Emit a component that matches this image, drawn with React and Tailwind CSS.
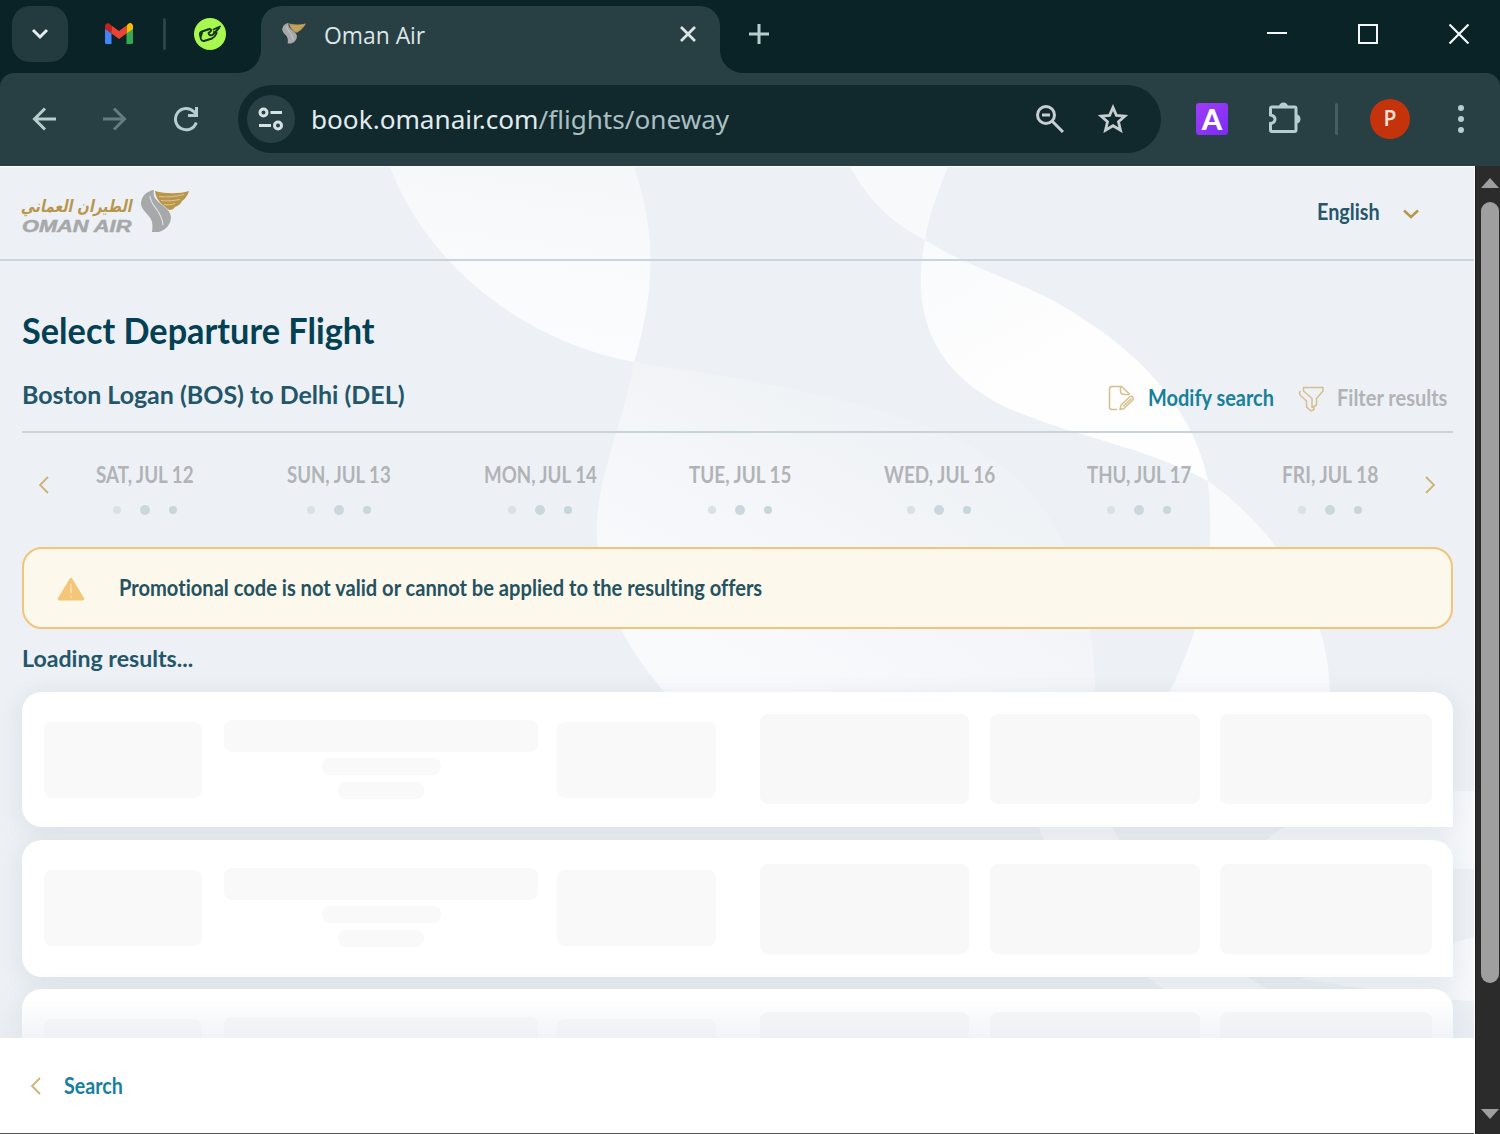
import React, { useLayoutEffect, useRef, useState } from 'react';

const DAYS = [
    { label: 'SAT, JUL 12', cell: 'w-[194px]', text: 'w-[98px]' },
    { label: 'SUN, JUL 13', cell: 'w-[194px]', text: 'w-[104px]' },
    { label: 'MON, JUL 14', cell: 'w-[208px]', text: 'w-[113px]' },
    { label: 'TUE, JUL 15', cell: 'w-[192px]', text: 'w-[102px]' },
    { label: 'WED, JUL 16', cell: 'w-[206px]', text: 'w-[111px]' },
    { label: 'THU, JUL 17', cell: 'w-[193px]', text: 'w-[104px]' },
    { label: 'FRI, JUL 18', cell: 'w-[190px]', text: 'w-[96px]' },
];

// Condenses a line of text so that it fills the width of its box
const FitText = ({ className = '', children }) => {
    const box = useRef(null);
    const text = useRef(null);
    const [scale, setScale] = useState(1);

    useLayoutEffect(() => {
        setScale(box.current.clientWidth / text.current.offsetWidth);
    }, [children]);

    return (
        <span ref={box} className={`flex shrink-0 whitespace-nowrap ${className}`}>
            <span ref={text} className="block shrink-0 origin-left" style={{ transform: `scaleX(${scale})` }}>
                {children}
            </span>
        </span>
    );
};

const Falcon = ({ className }) => (
    <svg viewBox="0 0 48 43" className={className}>
        <path d="M13 0C5 1 0 7 0 14c1 8 9 10 11 18 .8 4 .3 7 0 10h7c7-2 12-8 12-15C29 17 16 14 13 6c-.5-2-.5-4 0-6z" fill="#a7a8aa" />
        <path d="M9 6c0 10 12 14 13 29" stroke="#dfe3e6" strokeWidth="1.1" fill="none" />
        <path d="M14 1c11 3 24 3 34 0-1 4-4 8-7 10-1 3-4 5-7 6-1 2-3 3-6 3C22 15 15 11 14 1z" fill="#b8964c" />
        <path d="M18 6.500c9 1 17 0 25-2M20 10.500c7 1 13 0 19-1M23 14.500c4 1 8 0 11-1" stroke="#e6d3a3" strokeWidth="0.8" fill="none" />
    </svg>
);

const TabStrip = () => (
    <div className="flex h-[73px] items-start bg-[#0a2326]">
        <div className="ml-3 mt-1.5 flex h-14 w-14 items-center justify-center rounded-[18px] bg-[#233b3f]">
            <svg viewBox="0 0 18 12" className="h-3 w-[18px]" fill="none" stroke="#e4eeee" strokeWidth="3">
                <path d="M2 2l7 7 7-7" />
            </svg>
        </div>
        <svg viewBox="0 0 28 21" className="ml-[37px] mt-[23px] h-[21px] w-7">
            <path d="M0 4v15.500q0 1.500 1.500 1.500H6.500V8z" fill="#4285f4" />
            <path d="M28 4v15.500q0 1.500-1.500 1.500H21.500V8z" fill="#34a853" />
            <path d="M21.500 3v7.500L28 6V3.500c0-3-3-4.500-5-2.500z" fill="#fbbc04" />
            <path d="M0 3.500V6l6.500 4.500V3L5 1C3-.500 0 .500 0 3.500z" fill="#c5221f" />
            <path d="M6.500 2.500v8L14 16l7.500-5.500v-8L14 8z" fill="#ea4335" />
        </svg>
        <div className="ml-[30px] mt-[18px] h-8 w-[3px] rounded-full bg-[#2a4347]" />
        <svg viewBox="0 0 32 32" className="ml-7 mt-[18px] h-8 w-8">
            <circle cx="16" cy="16" r="16" fill="#a8f94f" />
            <g fill="none" stroke="#16300f" strokeWidth="1.900" strokeLinejoin="round" strokeLinecap="round">
                <path d="M14 11.500 8 13.500q-2.500 1-2 3.500l1 4q.700 2.500 3 2l8-2.500q3-1.500 4.500-5" />
                <path d="M14 11.500c2.500-1.500 4 .500 2.500 2l-2 1.500c.500 2.500 3 3 4.500 1.500l6-6.500" />
                <path d="M19.500 11.500 26 8.500M20 14l2.500.500M8 15l-1 3" />
            </g>
        </svg>
        {/* active tab with the flared feet */}
        <svg viewBox="0 0 24 24" className="ml-[11px] mt-[49px] h-6 w-6">
            <path d="M24 0v24H0C14 24 24 14 24 0z" fill="#283f43" />
        </svg>
        <div className="mt-1.5 flex h-[67px] w-[459px] rounded-t-[20px] bg-[#283f43]">
            <Falcon className="ml-[21px] mt-[17px] h-[21px] w-6" />
            <FitText className="ml-[18px] mt-[13px] h-8 w-[101px] font-['Open_Sans',sans-serif] text-2xl leading-8 text-[#dbe6e7]">Oman Air</FitText>
            <svg viewBox="0 0 16 16" className="ml-[255px] mt-5 h-4 w-4" stroke="#dbe6e7" strokeWidth="2.800">
                <path d="m1 1 14 14M15 1 1 15" />
            </svg>
        </div>
        <svg viewBox="0 0 24 24" className="mt-[49px] h-6 w-6">
            <path d="M0 0v24h24C10 24 0 14 0 0z" fill="#283f43" />
        </svg>
        <svg viewBox="0 0 20 20" className="ml-[5px] mt-6 h-5 w-5" stroke="#b7cdd0" strokeWidth="3">
            <path d="M10 0v20M0 10h20" />
        </svg>
        <div className="ml-auto mr-[31px] mt-6 flex gap-[71px]">
            <svg viewBox="0 0 20 20" className="h-5 w-5" stroke="#f3f7f7" strokeWidth="2">
                <path d="M0 9h20" />
            </svg>
            <svg viewBox="0 0 20 20" className="h-5 w-5" fill="none" stroke="#f3f7f7" strokeWidth="2">
                <path d="M1 1h18v18H1z" />
            </svg>
            <svg viewBox="0 0 20 20" className="h-5 w-5" stroke="#f3f7f7" strokeWidth="2.200">
                <path d="m.500.500 19 19M19.500.500l-19 19" />
            </svg>
        </div>
    </div>
);

const Toolbar = () => (
    <div className="h-[93px] bg-[#0a2326]">
        <div className="flex h-full items-center rounded-t-[14px] bg-[#283f43] pb-0.5">
            <svg viewBox="0 0 24 24" className="ml-8 h-6 w-6" fill="none" stroke="#b7cdd0" strokeWidth="3">
                <path d="M24 12H3M13 1.500 2.500 12 13 22.500" />
            </svg>
            <svg viewBox="0 0 24 24" className="ml-[47px] h-6 w-6" fill="none" stroke="#647b7f" strokeWidth="3">
                <path d="M0 12h21M11 1.500 21.500 12 11 22.500" />
            </svg>
            <svg viewBox="0 0 26 26" className="ml-[46px] h-[26px] w-[26px]" fill="none" stroke="#b7cdd0" strokeWidth="3">
                <path d="M23.300 16.500A10.700 10.700 0 1 1 21 5.800L23 8" />
                <path d="M23.500 1v8.500H15" />
            </svg>
            <div className="ml-[39px] flex h-[68px] w-[923px] items-center rounded-full bg-[#11292d]">
                <div className="ml-[9px] flex h-12 w-12 items-center justify-center rounded-full bg-[#283f43]">
                    <svg viewBox="0 0 26 24" className="h-6 w-[26px]" fill="none" stroke="#d5e2e4" strokeWidth="3">
                        <circle cx="5.500" cy="5.500" r="3.500" />
                        <circle cx="20" cy="18.500" r="3.500" />
                        <path d="M12.500 5.500H24M1 18.500h12" />
                    </svg>
                </div>
                <FitText className="ml-4 w-[418px] font-['Noto_Sans',sans-serif] text-[26px] leading-9 text-[#a9bfc2]">
                    <span className="text-[#e2ecee]">book.omanair.com</span>/flights/oneway
                </FitText>
                <svg viewBox="0 0 28 28" className="ml-[307px] h-7 w-7" fill="none" stroke="#c6ced0" strokeWidth="3">
                    <circle cx="10" cy="10" r="8.500" />
                    <path d="m16 16 11 11M6 10h8" />
                </svg>
                <svg viewBox="0 0 30 29" className="ml-[34px] h-[29px] w-[30px]" fill="none" stroke="#c6ced0" strokeWidth="2.800">
                    <path d="m15 3.500 3.400 7.900 8.600.7-6.500 5.700 2 8.400L15 21.700l-7.500 4.500 2-8.400L3 12.100l8.600-.7z" />
                </svg>
            </div>
            <div className="ml-[35px] flex h-8 w-8 items-center justify-center rounded-[3px] bg-linear-to-br from-[#a13cf8] to-[#7a2cf2] font-['Lato',sans-serif] text-[29px] leading-8 font-black text-white">A</div>
            <svg viewBox="0 0 34 34" className="ml-[39px] h-[34px] w-[34px] -translate-y-0.5">
                <path d="M5 7h22.500q1.500 0 1.500 1.500V30q0 1.500-1.500 1.500H5Q3.500 31.500 3.500 30v-6.500c6-1 6-7.500 0-8.500V8.500Q3.500 7 5 7z" fill="none" stroke="#b7cdd0" strokeWidth="3" />
                <path d="M12 6.500a4.500 4 0 0 1 9 0zM29.500 14.500a4 4.500 0 0 1 0 9z" fill="#b7cdd0" />
            </svg>
            <div className="ml-[34px] h-8 w-[3px] rounded-full bg-[#465d61]" />
            <div className="ml-8 flex h-10 w-10 items-center justify-center rounded-full bg-[#c5330c] font-['Open_Sans',sans-serif] text-[21px] font-semibold text-[#fbe3da]">P</div>
            <div className="ml-12 flex flex-col gap-[5px]">
                <span className="h-1.5 w-1.5 rounded-full bg-[#b7cdd0]" />
                <span className="h-1.5 w-1.5 rounded-full bg-[#b7cdd0]" />
                <span className="h-1.5 w-1.5 rounded-full bg-[#b7cdd0]" />
            </div>
        </div>
    </div>
);

// Soft ribbon artwork behind the page, same coordinates as the content area
const Ribbons = () => (
    <svg viewBox="0 0 1475 872" className="absolute inset-0 h-[872px] w-[1475px]">
        <defs>
            <linearGradient id="petal" x1="0.6" y1="0" x2="0.4" y2="1">
                <stop offset="0" stopColor="#f5f7f9" />
                <stop offset="0.600" stopColor="#fafbfd" />
                <stop offset="1" stopColor="#fbfcfe" />
            </linearGradient>
            <linearGradient id="globe" x1="0.150" y1="0.800" x2="0.750" y2="0.100">
                <stop offset="0" stopColor="#f9fafc" />
                <stop offset="0.500" stopColor="#f3f5f8" />
                <stop offset="1" stopColor="#edf1f5" />
            </linearGradient>
            <linearGradient id="leaf" x1="0" y1="0" x2="0.400" y2="0.600">
                <stop offset="0" stopColor="#f9fafc" />
                <stop offset="1" stopColor="#fefefe" />
            </linearGradient>
        </defs>
        <path d="M390 0C430 104 530 176 634 195C656 120 656 66 634 0z" fill="url(#petal)" />
        <path d="M634 195C780 218 930 240 1010 305C1065 350 1096 440 1095 528H667C625 480 597 430 597 360C597 310 628 240 634 195z" fill="url(#globe)" />
        <path d="M850 0C870 36 895 58 925 73C929 48 938 24 948 0z" fill="#f7f9fa" />
        <path d="M925 73C975 105 1030 115 1085 153C1150 195 1195 250 1208 314C1140 278 1080 272 1005 240C935 205 910 150 925 73z" fill="url(#leaf)" />
        <path d="M1208 314C1275 362 1330 440 1330 528H1168C1202 460 1216 400 1208 314z" fill="#f9fafc" />
        <path d="M1037 655C1060 720 1110 790 1190 840H1300C1220 800 1150 740 1110 655z" fill="#f6f8fa" />
        <path d="M1475 624C1400 624 1290 640 1260 680C1330 700 1400 702 1475 702z" fill="#f6f8fb" />
        <path d="M1475 770C1400 790 1340 800 1300 812C1370 822 1420 832 1475 834z" fill="#f6f8fb" />
    </svg>
);

const SkeletonCard = ({ className = '', fares = 'mt-[22px]' }) => (
    <div className={`flex shrink-0 rounded-[20px] rounded-br-none bg-white pl-[22px] shadow-[0_4px_22px_3px_rgba(150,165,180,0.18)] ${className}`}>
        <div className="mt-[30px] h-[76px] w-[158px] rounded-lg bg-[#f9f9f9]" />
        <div className="ml-[22px] mt-7 flex w-[314px] flex-col items-center">
            <div className="h-8 w-full rounded-lg bg-[#f9f9f9]" />
            <div className="mt-1.5 h-[17px] w-[119px] rounded-lg bg-[#f9f9f9]" />
            <div className="mt-[7px] h-[17px] w-[86px] rounded-lg bg-[#f9f9f9]" />
        </div>
        <div className="ml-[19px] mt-[30px] h-[76px] w-[159px] rounded-lg bg-[#f9f9f9]" />
        <div className={`ml-11 flex ${fares}`}>
            <div className="h-[90px] w-[209px] rounded-lg bg-[#f8f8f8]" />
            <div className="ml-[21px] h-[90px] w-[210px] rounded-lg bg-[#f8f8f8]" />
            <div className="ml-5 h-[90px] w-[212px] rounded-lg bg-[#f8f8f8]" />
        </div>
    </div>
);

const DateCell = ({ day }) => (
    <div className={`flex flex-col items-center ${day.cell}`}>
        <FitText className={`text-[22px] leading-7 font-bold text-[#b1b3b6] ${day.text}`}>{day.label}</FitText>
        <div className="mt-4 flex h-2.5 items-center gap-[19px]">
            <span className="h-2 w-2 rounded-full bg-[#d9e1e5]" />
            <span className="h-2.5 w-2.5 rounded-full bg-[#cad8de]" />
            <span className="h-2 w-2 rounded-full bg-[#c6d6db]" />
        </div>
    </div>
);

const Arrow = ({ flip, className = '' }) => (
    <svg viewBox="0 0 10 18" className={`h-[18px] w-2.5 shrink-0 ${className}`} fill="none" stroke="#cdb277" strokeWidth="1.800">
        <path d={flip ? 'm1 1 8 8-8 8' : 'M9 1 1 9l8 8'} />
    </svg>
);

const Scrollbar = () => (
    <div className="flex h-full w-[25px] flex-col items-center border-l border-[#1f1f1f] bg-[#2b2b2b] pl-1">
        <svg viewBox="0 0 18 10" className="mt-3 h-2.5 w-[18px]"><path d="M9 0l9 10H0z" fill="#9f9f9f" /></svg>
        <div className="mt-[14px] h-[781px] w-[18px] rounded-full bg-[#9f9f9f]" />
        <svg viewBox="0 0 18 10" className="mt-[126px] h-2.5 w-[18px]"><path d="M0 0h18L9 10z" fill="#9f9f9f" /></svg>
    </div>
);

const App = () => {
    return (
        <div className="flex h-[1134px] w-[1500px] flex-col overflow-hidden font-['Lato',sans-serif] [font-variant-ligatures:no-common-ligatures]">
            <TabStrip />
            <Toolbar />
            <div className="flex h-[968px]">
                <div className="flex w-[1475px] flex-col border-t border-r border-white bg-[#edf1f5]">
                    <div className="relative h-[871px] overflow-hidden">
                        <Ribbons />
                        <div className="relative flex h-full flex-col">
                            <header className="flex h-[94px] shrink-0 border-b-2 border-[#cad4dc]">
                                <div className="ml-[22px] mt-[26px] flex w-[112px] flex-col [font-variant-ligatures:normal]">
                                    <FitText className="h-[26px] w-[111px] -skew-x-12 font-['DejaVu_Sans',sans-serif] text-[17px] leading-[26px] font-bold text-[#b8964c]">الطيران العماني</FitText>
                                    <FitText className="w-[109px] font-['Liberation_Sans',sans-serif] text-[17px] leading-4 font-bold text-[#a7a8aa] italic [-webkit-text-stroke:0.5px_#a7a8aa]">OMAN AIR</FitText>
                                </div>
                                <Falcon className="ml-[7px] mt-[23px] h-[43px] w-12" />
                                <FitText className="ml-auto mt-[31px] w-[63px] text-[22px] leading-7 font-bold text-[#265669]">English</FitText>
                                <svg viewBox="0 0 16 10" className="ml-[23px] mr-[55px] mt-[42px] h-2.5 w-4" fill="none" stroke="#b8964c" strokeWidth="2.500">
                                    <path d="m1 1.500 7 6.500 7-6.500" />
                                </svg>
                            </header>

                            <main className="flex flex-col pl-[22px] pr-[21px]">
                                <h1 className="mt-[46px]">
                                    <FitText className="w-[353px] text-[37px] leading-[46px] font-bold text-[#044054]">Select Departure Flight</FitText>
                                </h1>
                                <div className="mt-5 flex h-[60px] border-b-2 border-[#c9d3db]">
                                    <FitText className="mt-[5px] w-[383px] text-2xl leading-[34px] font-bold text-[#23566a]">Boston Logan (BOS) to Delhi (DEL)</FitText>
                                    <svg viewBox="0 0 26 26" className="ml-auto mt-[12px] h-[26px] w-[26px]" fill="none" stroke="#d6bf8e" strokeWidth="1.500" strokeLinejoin="round">
                                        <path d="M9 24.500H4q-2.500 0-2.500-2.500V4Q1.500 1.500 4 1.500h9.500L22 9.500" />
                                        <path d="M12.500 1.500V6q0 3.500 3.500 3.500h5" />
                                        <path d="m12 24.500 1-4.500 8.500-8q2-1.500 3.200 0 1.300 1.500-.200 3.200L16 23.500zM15 21.500l8.500-8" />
                                    </svg>
                                    <FitText className="ml-[14px] mt-[9px] w-[126px] text-[22px] leading-8 font-bold text-[#17809a]">Modify search</FitText>
                                    <svg viewBox="0 0 26 26" className="ml-[24px] mt-[13px] h-[26px] w-[26px]" fill="none" stroke="#d6bf8e" strokeWidth="1.500" strokeLinejoin="round">
                                        <path d="M5.500 1.500H25V5l-6.500 7.500V19L14 21.500v-9L5.500 5z" />
                                        <path d="M2.500 5Q.500 7.500 2.500 9.500L8.500 15v6l4.500 4 3-1.500V21" />
                                    </svg>
                                    <FitText className="ml-[13px] mr-1.5 mt-[9px] w-[110px] text-[22px] leading-8 font-bold text-[#b1b3b6]">Filter results</FitText>
                                </div>

                                <div className="flex h-[114px] pt-7">
                                    <Arrow className="ml-[17px] mt-[15px]" />
                                    <div className="ml-[-1px] flex">
                                        {DAYS.map((day) => (
                                            <DateCell key={day.label} day={day} />
                                        ))}
                                    </div>
                                    <Arrow flip className="mt-[15px]" />
                                </div>

                                <div className="flex h-[82px] items-center rounded-[20px] border-2 border-[#f0c47c] bg-[#fdf8ec]">
                                    <svg viewBox="0 0 28 24" className="ml-[33px] h-6 w-7 translate-y-px">
                                        <path d="M12.500 2Q14-.500 15.500 2L27 21q1 2.500-1.500 2.500h-23Q0 23.500 1 21z" fill="#f3c678" />
                                        <path d="M14 7v9M14 18.500v2.500" stroke="#f8dba3" strokeWidth="2" />
                                    </svg>
                                    <FitText className="ml-[34px] w-[643px] text-[22px] leading-8 font-bold text-[#24525f]">Promotional code is not valid or cannot be applied to the resulting offers</FitText>
                                </div>

                                <FitText className="mt-[12px] h-[34px] w-[171px] text-[23px] leading-[34px] font-bold text-[#23566a]">Loading results...</FitText>
                                <div className="mt-[17px] flex flex-col">
                                    <SkeletonCard className="h-[135px]" />
                                    <SkeletonCard className="mt-[13px] h-[137px]" fares="mt-6" />
                                    <SkeletonCard className="mt-3 h-[137px]" fares="mt-[23px]" />
                                </div>
                            </main>
                        </div>
                        <div className="absolute inset-x-0 bottom-0 h-10 bg-linear-to-b from-[#e8ebf2]/0 to-[#e4e8ef]/50" />
                    </div>
                    <footer className="flex flex-1 items-center border-b border-[#55565a] bg-white">
                        <Arrow className="ml-[31px]" />
                        <FitText className="ml-[23px] w-[59px] text-[22px] leading-8 font-bold text-[#17809a]">Search</FitText>
                    </footer>
                </div>
                <Scrollbar />
            </div>
        </div>
    );
};

export default App;
